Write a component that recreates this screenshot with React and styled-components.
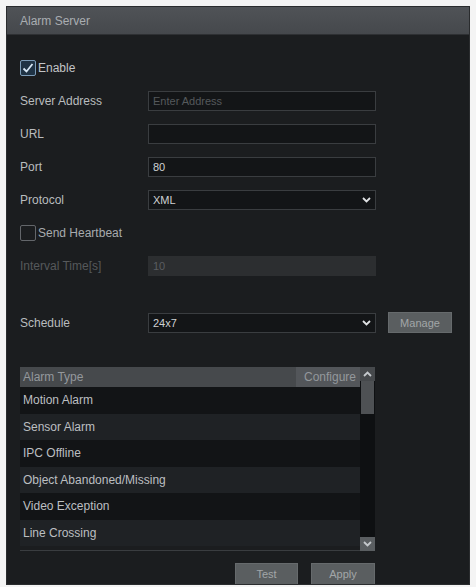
import React from "react";
import styled, { createGlobalStyle } from "styled-components";

const GlobalStyle = createGlobalStyle`
  html, body {
    margin: 0;
    padding: 0;
    background: #f4f4f4;
  }
  body {
    font-family: "Liberation Sans", Arial, sans-serif;
  }
`;

const Panel = styled.div`
  box-sizing: border-box;
  margin: 6px 6px 0 6px;
  width: 464px;
  height: 579px;
  background: #1b1d1f;
  border: 1px solid #2a2c2e;
  display: flex;
  flex-direction: column;
  overflow: hidden;
`;

const Header = styled.div`
  height: 27px;
  flex: none;
  background: linear-gradient(#505357, #45484c);
  color: #a9adb1;
  font-size: 12px;
  display: flex;
  align-items: center;
  padding-left: 13px;
  border-bottom: 1px solid #2e3033;
`;

const Body = styled.div`
  padding: 16px 0 0 13px;
  display: flex;
  flex-direction: column;
  flex: 1;
`;

const Row = styled.div`
  height: 33px;
  display: flex;
  align-items: center;
  margin-top: ${(p) => p.$gap || 0}px;
`;

const Label = styled.div`
  width: 128px;
  flex: none;
  font-size: 12px;
  color: ${(p) => (p.$disabled ? "#56595b" : "#b9bcbe")};
`;

const Field = styled.div`
  box-sizing: border-box;
  width: 228px;
  height: 20px;
  background: ${(p) => (p.$disabled ? "#2c2e30" : "#131517")};
  border: 1px solid ${(p) => (p.$disabled ? "#2c2e30" : "#3a3d40")};
  display: flex;
  align-items: center;
  justify-content: space-between;
  padding: 0 4px 0 4px;
  font-size: 11px;
  color: ${(p) => (p.$disabled ? "#5a5d60" : p.$placeholder ? "#55595c" : "#cfd1d3")};
`;

const CheckRow = styled.label`
  display: flex;
  align-items: center;
  gap: 2px;
  font-size: 12px;
  color: ${(p) => (p.$dim ? "#a8abae" : "#c2c4c6")};
`;

const Box = styled.span`
  box-sizing: border-box;
  width: 16px;
  height: 16px;
  border: 1px solid ${(p) => (p.$checked ? "#7c9cb8" : "#63666a")};
  background: ${(p) => (p.$checked ? "#1f3345" : "#1b1d1f")};
  border-radius: 2px;
  display: flex;
  align-items: center;
  justify-content: center;
`;

const Button = styled.div`
  box-sizing: border-box;
  width: ${(p) => p.$w || 64}px;
  height: ${(p) => p.$h || 21}px;
  background: #5a5e60;
  border: 1px solid #666a6c;
  color: #a2a6a8;
  font-size: 11px;
  display: flex;
  align-items: center;
  justify-content: center;
`;

const ManageButton = styled(Button)`
  margin-left: 12px;
`;

const Table = styled.div`
  margin-top: 28px;
  width: 355px;
  height: 184px;
  display: flex;
`;

const TableMain = styled.div`
  width: 340px;
  display: flex;
  flex-direction: column;
`;

const TableHead = styled.div`
  height: 20px;
  flex: none;
  display: flex;
  background: #46494c;
  font-size: 12px;
  color: #94989c;
`;

const HeadCell = styled.div`
  display: flex;
  align-items: center;
  padding: 0 ${(p) => (p.$right ? 4 : 3)}px;
  flex: ${(p) => (p.$grow ? 1 : "none")};
  width: ${(p) => (p.$w ? p.$w + "px" : "auto")};
  background: ${(p) => (p.$right ? "#53565a" : "transparent")};
  justify-content: ${(p) => (p.$right ? "flex-end" : "flex-start")};
  box-sizing: border-box;
`;

const List = styled.div`
  flex: 1;
  display: flex;
  flex-direction: column;
  border-bottom: 1px solid #3a3d40;
`;

const ListRow = styled.div`
  height: 26.5px;
  flex: none;
  display: flex;
  align-items: center;
  padding-left: 3px;
  font-size: 12px;
  color: #bcbfc1;
  background: ${(p) => (p.$odd ? "#1f2225" : "#121416")};
`;

const Scrollbar = styled.div`
  width: 15px;
  display: flex;
  flex-direction: column;
  background: #0e1012;
`;

const ScrollArrow = styled.div`
  height: 14px;
  flex: none;
  display: flex;
  align-items: center;
  justify-content: center;
  background: ${(p) => (p.$filled ? "#5a5e61" : "#46494c")};
`;

const Thumb = styled.div`
  margin: 0 1px;
  height: 33px;
  background: #4e5154;
`;

const Track = styled.div`
  flex: 1;
`;

const Footer = styled.div`
  margin-top: 12px;
  width: 355px;
  display: flex;
  justify-content: flex-end;
  gap: 13px;
`;

const Chevron = ({ up, color = "#e0e2e4" }) => (
  <svg width="9" height="6" viewBox="0 0 9 6">
    <path
      d={up ? "M1 5 L4.5 1.5 L8 5" : "M1 1 L4.5 4.5 L8 1"}
      fill="none"
      stroke={color}
      strokeWidth="1.8"
    />
  </svg>
);

const Check = () => (
  <svg width="12" height="12" viewBox="0 0 12 12">
    <path d="M1.5 6.5 L4.5 9.5 L10.5 2" fill="none" stroke="#d6e6f4" strokeWidth="1.8" />
  </svg>
);

const alarms = [
  "Motion Alarm",
  "Sensor Alarm",
  "IPC Offline",
  "Object Abandoned/Missing",
  "Video Exception",
  "Line Crossing",
];

const App = () => (
  <>
    <GlobalStyle />
    <Panel>
      <Header>Alarm Server</Header>
      <Body>
        <Row>
          <CheckRow>
            <Box $checked>
              <Check />
            </Box>
            Enable
          </CheckRow>
        </Row>
        <Row>
          <Label>Server Address</Label>
          <Field $placeholder>Enter Address</Field>
        </Row>
        <Row>
          <Label>URL</Label>
          <Field />
        </Row>
        <Row>
          <Label>Port</Label>
          <Field>80</Field>
        </Row>
        <Row>
          <Label>Protocol</Label>
          <Field>
            XML
            <Chevron />
          </Field>
        </Row>
        <Row>
          <CheckRow $dim>
            <Box />
            Send Heartbeat
          </CheckRow>
        </Row>
        <Row>
          <Label $disabled>Interval Time[s]</Label>
          <Field $disabled>10</Field>
        </Row>
        <Row $gap={24}>
          <Label>Schedule</Label>
          <Field>
            24x7
            <Chevron />
          </Field>
          <ManageButton>Manage</ManageButton>
        </Row>
        <Table>
          <TableMain>
            <TableHead>
              <HeadCell $grow>Alarm Type</HeadCell>
              <HeadCell $right $w={64}>Configure</HeadCell>
            </TableHead>
            <List>
              {alarms.map((a, i) => (
                <ListRow key={a} $odd={i % 2 === 1}>
                  {a}
                </ListRow>
              ))}
            </List>
          </TableMain>
          <Scrollbar>
            <ScrollArrow>
              <Chevron up color="#c4c8cc" />
            </ScrollArrow>
            <Thumb />
            <Track />
            <ScrollArrow $filled>
              <Chevron color="#c4c8cc" />
            </ScrollArrow>
          </Scrollbar>
        </Table>
        <Footer>
          <Button $w={63} $h={22}>Test</Button>
          <Button $w={64} $h={22}>Apply</Button>
        </Footer>
      </Body>
    </Panel>
  </>
);

export default App;
